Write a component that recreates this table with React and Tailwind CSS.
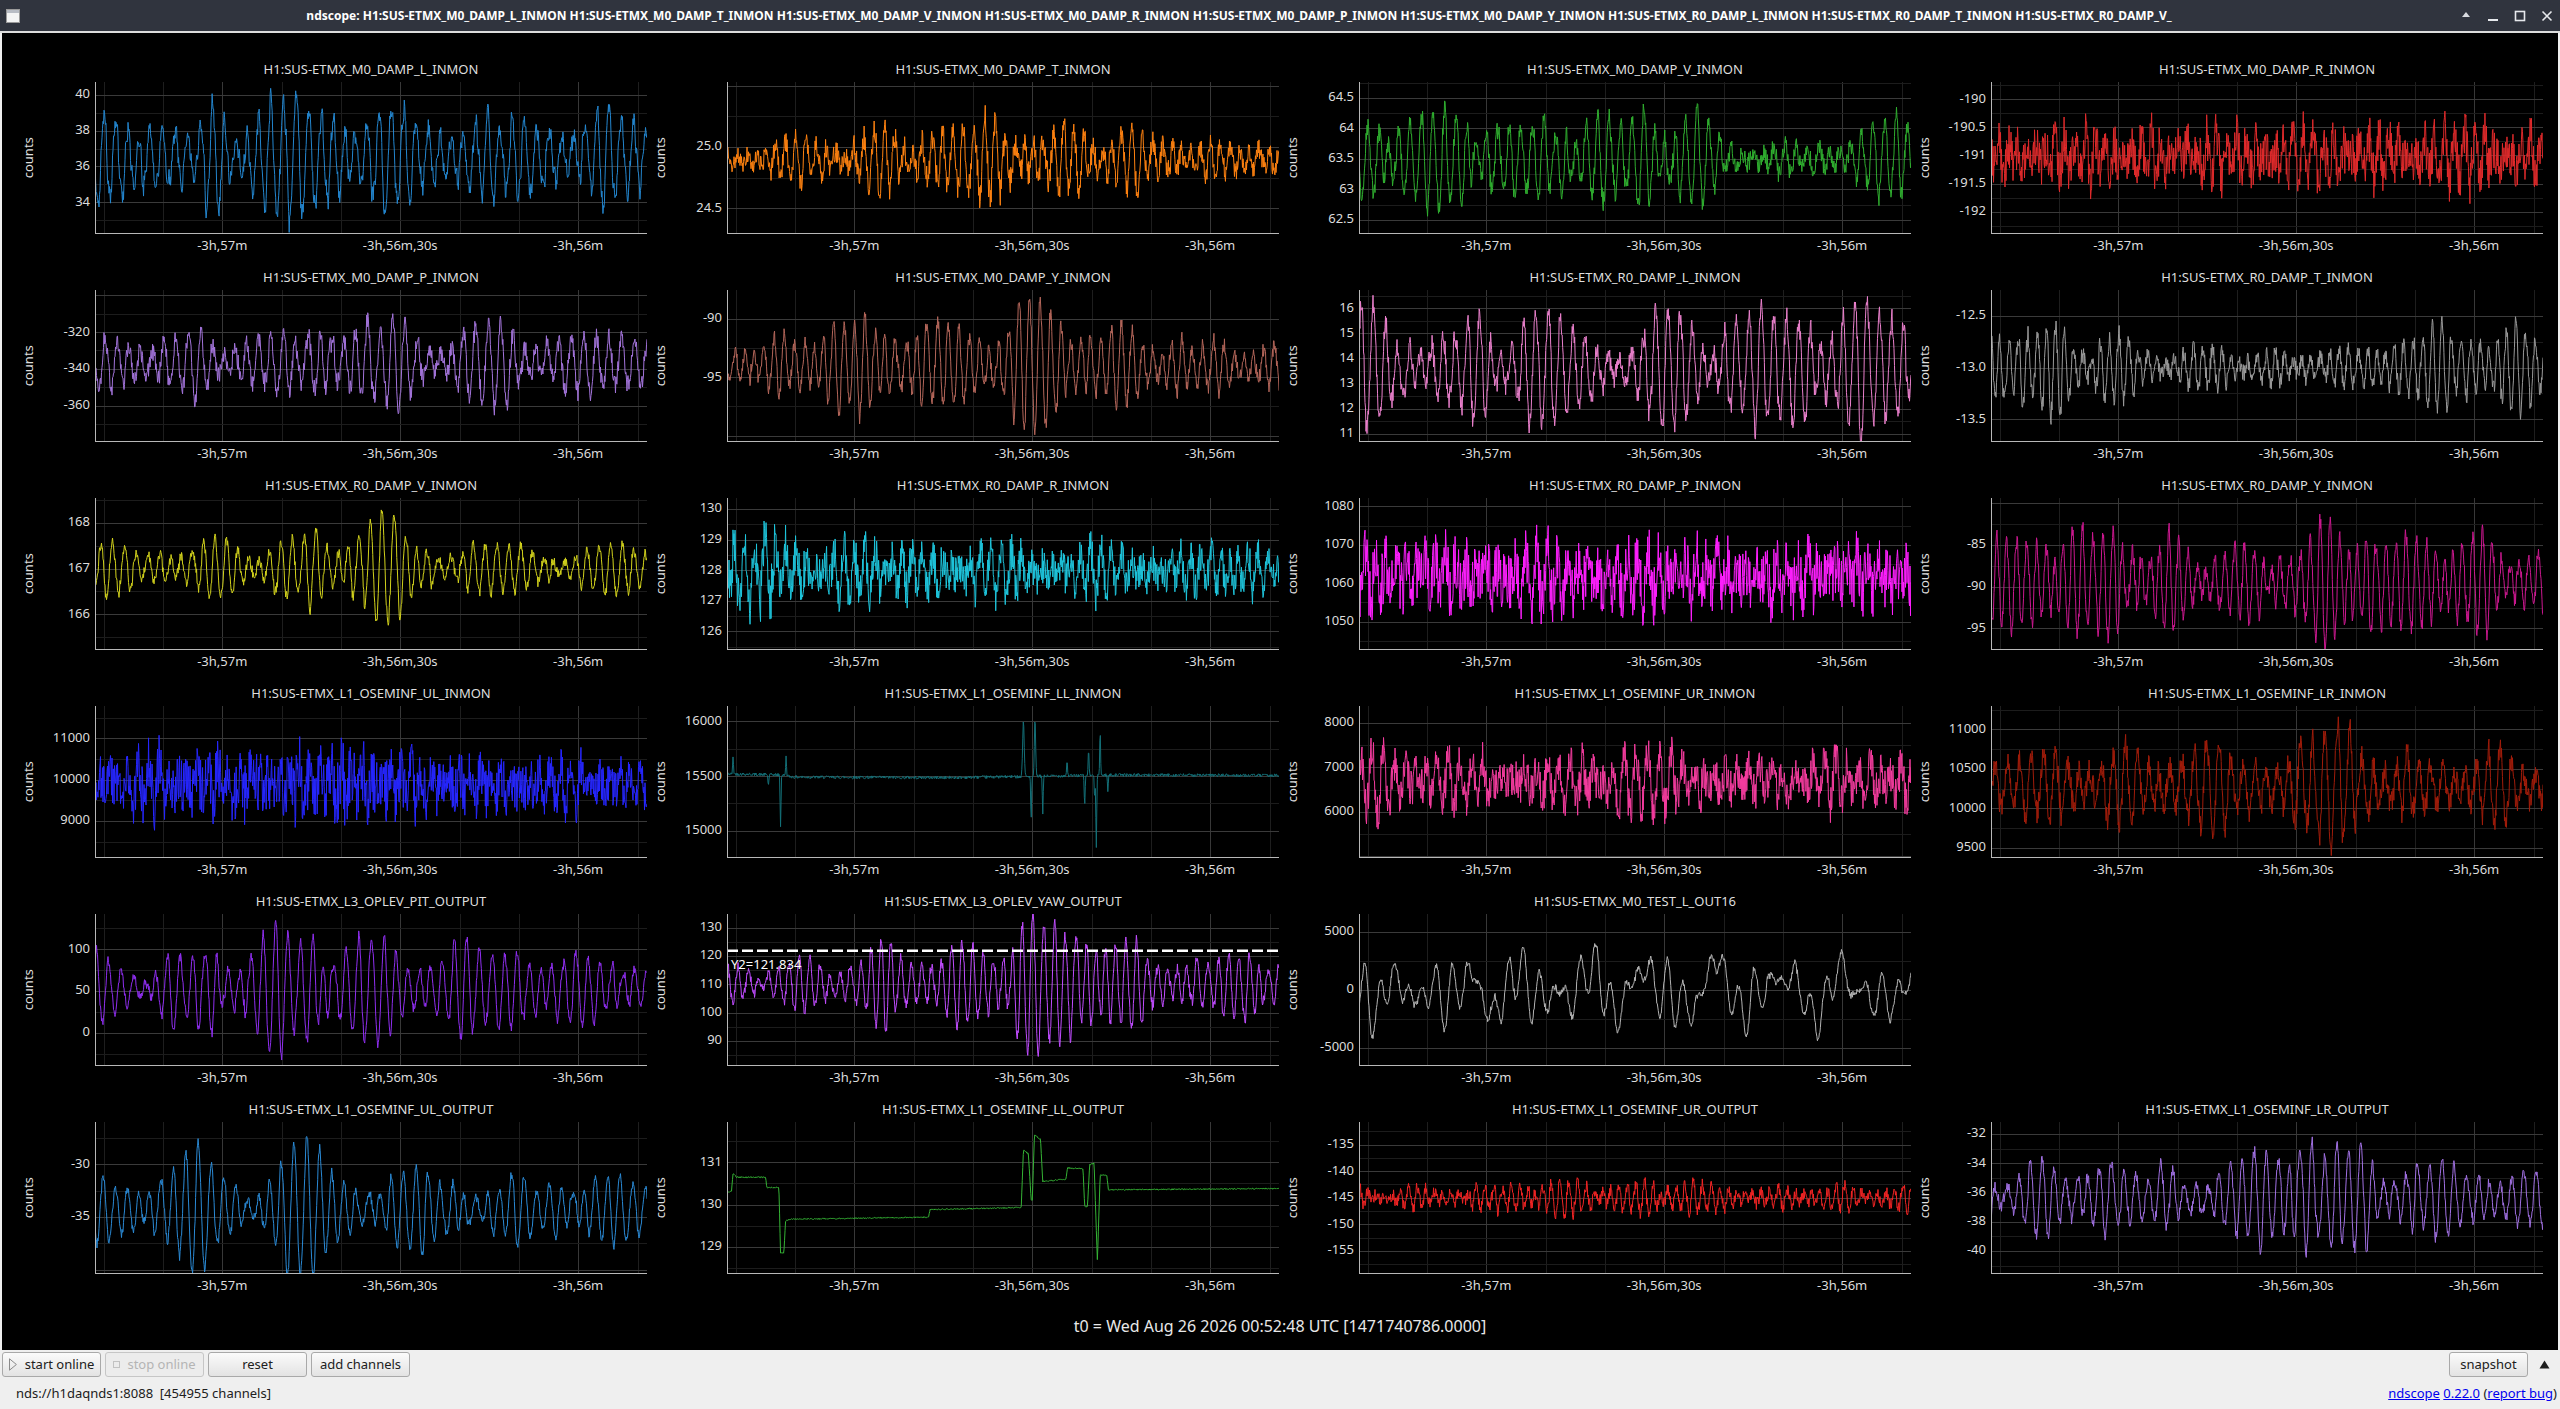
import React from 'react';

// plot geometry (px)
const W = 552;
const H = 152;
const AX = 56;
const N = 1104;

const XTICKS = [
  { k: 2, label: '-3h,57m' },
  { k: 5, label: '-3h,56m,30s' },
  { k: 8, label: '-3h,56m' },
];
const xf = (k) => 0.0156 + 0.10747 * k;

function rng(seed) {
  let a = seed >>> 0;
  return () => {
    a = (a + 0x6d2b79f5) >>> 0;
    let t = a;
    t = Math.imul(t ^ (t >>> 15), t | 1);
    t ^= t + Math.imul(t ^ (t >>> 7), t | 61);
    return ((t ^ (t >>> 14)) >>> 0) / 4294967296;
  };
}

function interp(pts, t) {
  if (t <= pts[0][0]) return pts[0][1];
  for (let i = 1; i < pts.length; i++) {
    if (t <= pts[i][0]) {
      const [t0, v0] = pts[i - 1];
      const [t1, v1] = pts[i];
      return v0 + ((v1 - v0) * (t - t0)) / (t1 - t0);
    }
  }
  return pts[pts.length - 1][1];
}

const TAU = Math.PI * 2;

function makeSignal(s) {
  const r = rng(s.seed);
  const out = new Array(N);
  if (s.type === 'steps') {
    for (let i = 0; i < N; i++) {
      const t = i / (N - 1);
      out[i] = interp(s.pts, t) + (r() - 0.5) * 2 * s.noise;
    }
    return out;
  }
  if (s.type === 'spikes') {
    for (let i = 0; i < N; i++) {
      const t = i / (N - 1);
      let v = interp(s.base, t) + (r() - 0.5) * 2 * s.noise;
      for (const [tc, a, w] of s.spikes) {
        const d = (t - tc) / (w || 0.0011);
        if (Math.abs(d) < 4) v += a * Math.exp(-d * d);
      }
      out[i] = v;
    }
    return out;
  }
  if (s.type === 'multi') {
    // sum of random slow tones, a wandering signal
    const tones = Array.from({ length: 9 }, () => ({ f: 6 + r() * 34, a: 0.4 + r(), p: r() * TAU }));
    let g = 0;
    for (let i = 0; i < N; i++) {
      const t = i / (N - 1);
      let v = 0;
      for (const tn of tones) v += tn.a * Math.sin(TAU * tn.f * t + tn.p);
      g = g * 0.9 + (r() - 0.5) * 0.5;
      out[i] = s.mean + s.A * v * 0.45 + s.A * g * 0.5 + (r() - 0.5) * 2 * s.noise;
    }
    return out;
  }
  const ph = [r(), r(), r()].map((x) => x * TAU);
  const amf = [2 + r() * 3, 5 + r() * 4, 9 + r() * 6];
  const amp = [r(), r(), r()].map((x) => x * TAU);
  const f2 = s.f2 ?? s.f * 0.88;
  const b = s.b ?? 0.4;
  const am = s.am ?? 0.25;
  const amr = s.amr ?? 0.9;
  let walk = 0;
  let g = 0;
  for (let i = 0; i < N; i++) {
    const t = i / (N - 1);
    walk = walk * 0.994 + (r() - 0.5) * (s.jit ?? 0.22);
    g = g * 0.965 + (r() - 0.5) * 0.16;
    const e = s.env ? interp(s.env, t) : 1;
    const m =
      1 +
      am *
        (Math.sin(TAU * amf[0] * t + amp[0]) * 0.5 +
          Math.sin(TAU * amf[1] * t + amp[1]) * 0.3 +
          Math.sin(TAU * amf[2] * t + amp[2]) * 0.2) +
      amr * g;
    const osc = Math.sin(TAU * s.f * t + ph[0] + walk) + b * Math.sin(TAU * f2 * t + ph[1] - walk * 0.5);
    const fast = (s.c ?? 0) * Math.sin(TAU * (s.fc ?? 140) * t + ph[2]);
    out[i] = s.mean + s.A * e * (m * osc + fast) + (r() - 0.5) * 2 * s.noise * (s.nenv ? interp(s.nenv, t) : 1);
  }
  return out;
}

const PLOTS = [
  // row 1
  { title: 'H1:SUS-ETMX_M0_DAMP_L_INMON', color: '#2386cf', min: 32.22, max: 40.72, ticks: ['34', '36', '38', '40'],
    sig: { seed: 11, mean: 36.5, A: 2.0, f: 46, b: 0.45, noise: 0.4, am: 0.3, c: 0.15 } },
  { title: 'H1:SUS-ETMX_M0_DAMP_T_INMON', color: '#ff8210', min: 24.29, max: 25.53, ticks: ['24.5', '25.0'],
    sig: { seed: 12, mean: 24.9, A: 0.13, f: 56, b: 0.5, noise: 0.09, am: 0.3, env: [[0, 0.6], [0.35, 1.35], [0.6, 1.5], [0.8, 1], [1, 0.8]], nenv: [[0, 0.8], [0.5, 1.3], [1, 0.8]] } },
  { title: 'H1:SUS-ETMX_M0_DAMP_V_INMON', color: '#2fae2f', min: 62.27, max: 64.76, ticks: ['62.5', '63', '63.5', '64', '64.5'],
    sig: { seed: 13, mean: 63.5, A: 0.45, f: 50, b: 0.5, noise: 0.15, am: 0.3, env: [[0, 1], [0.35, 1.3], [0.6, 1], [0.72, 0.45], [0.85, 0.6], [1, 1.1]] } },
  { title: 'H1:SUS-ETMX_M0_DAMP_R_INMON', color: '#e02a2b', min: -192.4, max: -189.69, ticks: ['-192', '-191.5', '-191', '-190.5', '-190'],
    sig: { seed: 14, mean: -191.0, A: 0.22, f: 58, b: 0.6, noise: 0.42, am: 0.3 } },
  // row 2
  { title: 'H1:SUS-ETMX_M0_DAMP_P_INMON', color: '#a374db', min: -379.8, max: -297.1, ticks: ['-360', '-340', '-320'],
    sig: { seed: 21, mean: -337, A: 12, f: 46, b: 0.45, noise: 5, am: 0.3, env: [[0, 1], [0.3, 1], [0.45, 1.6], [0.6, 1.1], [1, 1]] } },
  { title: 'H1:SUS-ETMX_M0_DAMP_Y_INMON', color: '#b4665a', min: -100.54, max: -87.54, ticks: ['-95', '-90'],
    sig: { seed: 22, mean: -94, A: 2.6, f: 54, b: 0.35, noise: 0.6, am: 0.2, env: [[0, 0.6], [0.2, 1.3], [0.35, 1.1], [0.45, 0.9], [0.55, 1.6], [0.7, 0.8], [1, 0.6]] } },
  { title: 'H1:SUS-ETMX_R0_DAMP_L_INMON', color: '#ea80cc', min: 10.68, max: 16.72, ticks: ['11', '12', '13', '14', '15', '16'],
    sig: { seed: 23, mean: 13.6, A: 1.4, f: 47, b: 0.5, noise: 0.4, am: 0.3, env: [[0, 1.1], [0.25, 0.8], [0.5, 1], [0.9, 1.2], [1, 1.4]] } },
  { title: 'H1:SUS-ETMX_R0_DAMP_T_INMON', color: '#9a9a9a', min: -13.72, max: -12.25, ticks: ['-13.5', '-13.0', '-12.5'],
    sig: { seed: 24, mean: -13.0, A: 0.24, f: 60, b: 0.4, noise: 0.08, am: 0.2, env: [[0, 1.5], [0.15, 1.3], [0.3, 0.6], [0.55, 0.4], [0.7, 0.9], [1, 1.1]] } },
  // row 3
  { title: 'H1:SUS-ETMX_R0_DAMP_V_INMON', color: '#d2d21c', min: 165.22, max: 168.54, ticks: ['166', '167', '168'],
    sig: { seed: 31, mean: 167, A: 0.42, f: 49, b: 0.45, noise: 0.11, am: 0.25, env: [[0, 0.8], [0.3, 1], [0.5, 1.7], [0.65, 1.1], [1, 0.8]] } },
  { title: 'H1:SUS-ETMX_R0_DAMP_R_INMON', color: '#1ec5dc', min: 125.39, max: 130.36, ticks: ['126', '127', '128', '129', '130'],
    sig: { seed: 32, mean: 128.0, A: 0.45, f: 56, b: 0.6, noise: 0.65, am: 0.3, env: [[0, 1.6], [0.2, 1.1], [1, 0.9]], nenv: [[0, 1.4], [0.2, 1], [1, 0.85]] } },
  { title: 'H1:SUS-ETMX_R0_DAMP_P_INMON', color: '#ff1fff', min: 1042.6, max: 1082.2, ticks: ['1050', '1060', '1070', '1080'],
    sig: { seed: 33, mean: 1062, A: 3.5, f: 55, b: 0.6, noise: 7.5, am: 0.3 } },
  { title: 'H1:SUS-ETMX_R0_DAMP_Y_INMON', color: '#cc1890', min: -97.58, max: -79.37, ticks: ['-95', '-90', '-85'],
    sig: { seed: 34, mean: -89.5, A: 3.8, f: 58, b: 0.4, noise: 1, am: 0.25, env: [[0, 0.9], [0.25, 1.2], [0.5, 0.8], [0.65, 1.5], [0.85, 0.9], [1, 0.6]] } },
  // row 4
  { title: 'H1:SUS-ETMX_L1_OSEMINF_UL_INMON', color: '#2626ff', min: 8104, max: 11784, ticks: ['9000', '10000', '11000'],
    sig: { seed: 41, mean: 9900, A: 280, f: 55, b: 0.6, noise: 560, am: 0.3, nenv: [[0, 1], [0.45, 1.55], [0.65, 1.1], [1, 0.8]] } },
  { title: 'H1:SUS-ETMX_L1_OSEMINF_LL_INMON', color: '#137078', min: 14753, max: 16138, ticks: ['15000', '15500', '16000'],
    sig: { seed: 42, type: 'spikes', noise: 14,
      base: [[0, 15520], [0.1, 15510], [0.12, 15490], [0.4, 15485], [0.53, 15495], [0.7, 15510], [1, 15505]],
      spikes: [[0.011, 150], [0.075, -100], [0.097, -470], [0.107, 170], [0.537, 500, 0.002], [0.551, -400], [0.558, 520, 0.0016], [0.572, -340], [0.616, 140], [0.648, -280], [0.655, 240], [0.666, -200], [0.669, -650], [0.676, 390], [0.69, -140]] } },
  { title: 'H1:SUS-ETMX_L1_OSEMINF_UR_INMON', color: '#f53c9f', min: 4966, max: 8382, ticks: ['6000', '7000', '8000'],
    sig: { seed: 43, mean: 6700, A: 320, f: 50, b: 0.6, noise: 440, am: 0.3 } },
  { title: 'H1:SUS-ETMX_L1_OSEMINF_LR_INMON', color: '#a11c0a', min: 9373, max: 11295, ticks: ['9500', '10000', '10500', '11000'],
    sig: { seed: 44, mean: 10280, A: 330, f: 47, b: 0.4, noise: 150, am: 0.3, env: [[0, 0.9], [0.5, 1], [0.6, 1.5], [0.68, 1.5], [0.8, 0.9], [1, 0.8]] } },
  // row 5
  { title: 'H1:SUS-ETMX_L3_OPLEV_PIT_OUTPUT', color: '#8f2ef0', min: -39.5, max: 141.9, ticks: ['0', '50', '100'],
    sig: { seed: 51, mean: 52, A: 33, f: 46, b: 0.45, noise: 5, am: 0.3, env: [[0, 1], [0.3, 1.1], [0.5, 1.45], [0.65, 1], [1, 0.9]] } },
  { title: 'H1:SUS-ETMX_L3_OPLEV_YAW_OUTPUT', color: '#c04cff', min: 81.1, max: 134.8, ticks: ['90', '100', '110', '120', '130'], cursor: 121.834,
    sig: { seed: 52, mean: 110, A: 9, f: 54, b: 0.35, noise: 1.8, am: 0.25, env: [[0, 0.6], [0.2, 0.8], [0.3, 1.3], [0.45, 0.9], [0.55, 1.9], [0.67, 1.9], [0.76, 0.9], [1, 0.9]] } },
  { title: 'H1:SUS-ETMX_M0_TEST_L_OUT16', color: '#b4b4b4', min: -6559, max: 6533, ticks: ['-5000', '0', '5000'],
    sig: { seed: 53, type: 'multi', mean: 0, A: 1700, noise: 220 } },
  null,
  // row 6
  { title: 'H1:SUS-ETMX_L1_OSEMINF_UL_OUTPUT', color: '#2a8ad6', min: -40.4, max: -26.0, ticks: ['-35', '-30'],
    sig: { seed: 61, mean: -34.3, A: 2.4, f: 46, b: 0.45, noise: 0.35, am: 0.3, env: [[0, 0.9], [0.35, 1.5], [0.55, 1.2], [0.7, 0.9], [1, 0.9]] } },
  { title: 'H1:SUS-ETMX_L1_OSEMINF_LL_OUTPUT', color: '#35b435', min: 128.35, max: 131.96, ticks: ['129', '130', '131'],
    sig: { seed: 62, type: 'steps', noise: 0.014,
      pts: [[0, 130.3], [0.008, 130.3], [0.011, 130.75], [0.017, 130.65], [0.07, 130.65], [0.072, 130.4], [0.094, 130.4], [0.097, 128.85], [0.103, 128.85], [0.106, 129.6], [0.112, 129.65], [0.365, 129.7], [0.368, 129.88], [0.533, 129.93], [0.537, 131.3], [0.546, 131.2], [0.551, 130.1], [0.553, 130.1], [0.557, 131.65], [0.568, 131.55], [0.572, 130.55], [0.614, 130.6], [0.617, 130.87], [0.645, 130.85], [0.648, 129.95], [0.653, 129.95], [0.657, 130.95], [0.665, 130.98], [0.671, 128.65], [0.676, 130.7], [0.688, 130.7], [0.691, 130.35], [1, 130.38]] } },
  { title: 'H1:SUS-ETMX_L1_OSEMINF_UR_OUTPUT', color: '#f22424', min: -159.35, max: -130.76, ticks: ['-155', '-150', '-145', '-140', '-135'],
    sig: { seed: 63, mean: -145, A: 1.5, f: 66, b: 0.5, noise: 1.2, am: 0.3, env: [[0, 0.9], [0.5, 1.4], [0.65, 1.3], [0.75, 0.9], [1, 0.9]] } },
  { title: 'H1:SUS-ETMX_L1_OSEMINF_LR_OUTPUT', color: '#a070e2', min: -41.58, max: -31.18, ticks: ['-40', '-38', '-36', '-34', '-32'],
    sig: { seed: 64, mean: -36.4, A: 1.6, f: 47, b: 0.4, noise: 0.35, am: 0.3, env: [[0, 1], [0.45, 1], [0.55, 2.1], [0.68, 1.9], [0.78, 1], [1, 1]] } },
];

function PlotArea({ p }) {
  const ys = (v) => ((p.max - v) / (p.max - p.min)) * H;
  const data = React.useMemo(() => makeSignal(p.sig), [p]);
  const pts = data
    .map((v, i) => `${((i / (N - 1)) * W).toFixed(2)},${ys(Math.min(p.max, Math.max(p.min, v))).toFixed(2)}`)
    .join(' ');
  const tv = p.ticks.map(Number);
  const step = Math.abs(tv[1] - tv[0]);
  const minor = [];
  for (let v = Math.min(...tv) - step * 4 + step / 2; v < p.max; v += step) {
    if (v > p.min) minor.push(v);
  }
  const major = [];
  for (let v = Math.min(...tv) - step * 4; v < p.max; v += step) {
    if (v > p.min) major.push(v);
  }

  return (
    <svg width={AX + W} height={H + 24} className="block overflow-visible">
      <svg x={AX} y={0} width={W} height={H}>
        {Array.from({ length: 10 }, (_, k) => {
          const x = Math.round(xf(k) * W) + 0.5;
          const isMajor = k === 2 || k === 5 || k === 8;
          return <line key={'v' + k} x1={x} x2={x} y1={0} y2={H} stroke={isMajor ? '#383838' : '#1e1e1e'} shapeRendering="crispEdges" />;
        })}
        {minor.map((v) => (
          <line key={'m' + v} x1={0} x2={W} y1={Math.round(ys(v)) + 0.5} y2={Math.round(ys(v)) + 0.5} stroke="#1c1c1c" shapeRendering="crispEdges" />
        ))}
        {major.map((v) => (
          <line key={'M' + v} x1={0} x2={W} y1={Math.round(ys(v)) + 0.5} y2={Math.round(ys(v)) + 0.5} stroke="#3a3a3a" shapeRendering="crispEdges" />
        ))}
        <polyline points={pts} fill="none" stroke={p.color} strokeWidth="1" strokeLinejoin="round" />
        {p.cursor != null && (
          <>
            <line x1={0} x2={W} y1={ys(p.cursor)} y2={ys(p.cursor)} stroke="#ffffff" strokeWidth="2.5" strokeDasharray="11 4" />
            <text x={4} y={ys(p.cursor) + 15} fontSize="13" fill="#ffffff" dominantBaseline="middle">
              Y2={p.cursor}
            </text>
          </>
        )}
      </svg>
      <line x1={AX + 0.5} x2={AX + 0.5} y1={0} y2={H} stroke="#b8b8b8" shapeRendering="crispEdges" />
      <line x1={AX} x2={AX + W} y1={H - 0.5} y2={H - 0.5} stroke="#b8b8b8" shapeRendering="crispEdges" />
      {p.ticks.map((t) => (
        <text key={t} x={AX - 5} y={ys(Number(t))} fontSize="13" fill="#dcdcdc" textAnchor="end" dominantBaseline="middle">
          {t}
        </text>
      ))}
      {XTICKS.map((t) => (
        <text key={t.label} x={AX + xf(t.k) * W} y={H + 13} fontSize="13" fill="#dcdcdc" textAnchor="middle" dominantBaseline="middle">
          {t.label}
        </text>
      ))}
    </svg>
  );
}

function Cell({ p }) {
  if (!p) return <div className="h-[201px]" />;
  return (
    <div className="flex h-[201px] flex-col">
      <div className="flex h-[25px] items-center justify-center pl-[76px] pr-[4px] text-[13px] text-[#dedede]">
        {p.title}
      </div>
      <div className="flex">
        <div className="flex h-[152px] w-[20px] items-center justify-center">
          <span className="block -rotate-90 whitespace-nowrap text-[13px] text-[#dedede]">counts</span>
        </div>
        <PlotArea p={p} />
      </div>
    </div>
  );
}

function TitleBar() {
  const title =
    'ndscope: H1:SUS-ETMX_M0_DAMP_L_INMON H1:SUS-ETMX_M0_DAMP_T_INMON H1:SUS-ETMX_M0_DAMP_V_INMON H1:SUS-ETMX_M0_DAMP_R_INMON H1:SUS-ETMX_M0_DAMP_P_INMON H1:SUS-ETMX_M0_DAMP_Y_INMON H1:SUS-ETMX_R0_DAMP_L_INMON H1:SUS-ETMX_R0_DAMP_T_INMON H1:SUS-ETMX_R0_DAMP_V_';
  return (
    <div className="flex h-[31px] items-center bg-[#30343e] text-white">
      <div className="flex w-[26px] justify-center">
        <svg width="14" height="14" viewBox="0 0 14 14">
          <rect x="0.5" y="0.5" width="13" height="13" fill="#f4f4f4" stroke="#9a9a9a" />
          <rect x="1" y="1" width="12" height="3" fill="#b8bcc4" />
        </svg>
      </div>
      <div className="flex-1 overflow-hidden whitespace-nowrap text-center text-[12px] font-bold">{title}</div>
      <div className="flex w-[108px]">
        <div className="flex w-[27px] justify-center">
          <svg width="10" height="8" viewBox="0 0 10 8"><path d="M1 7 L5 2 L9 7 Z" fill="#d8dbe0" /></svg>
        </div>
        <div className="flex w-[27px] justify-center">
          <svg width="12" height="12" viewBox="0 0 12 12"><rect x="1" y="9" width="10" height="2" fill="#e6e8ec" /></svg>
        </div>
        <div className="flex w-[27px] justify-center">
          <svg width="12" height="12" viewBox="0 0 12 12"><rect x="1.5" y="1.5" width="9" height="9" fill="none" stroke="#e6e8ec" strokeWidth="1.6" /></svg>
        </div>
        <div className="flex w-[27px] justify-center">
          <svg width="12" height="12" viewBox="0 0 12 12"><path d="M1.5 1.5 L10.5 10.5 M10.5 1.5 L1.5 10.5" stroke="#e6e8ec" strokeWidth="1.6" /></svg>
        </div>
      </div>
    </div>
  );
}

const btn =
  'flex h-[25px] w-[99px] items-center justify-center gap-[8px] rounded-[3px] border border-[#a9a9a9] bg-linear-to-b from-[#fbfbfb] to-[#e3e3e3] text-[13px] text-[#202020]';

export default function App() {
  return (
    <div className="flex h-[1409px] w-full flex-col overflow-hidden bg-[#efefef] font-['Noto_Sans',sans-serif]">
      <TitleBar />
      <div className="h-[2px] bg-[#dcdcdc]" />
      <div className="mx-[2px] flex h-[1317px] flex-col bg-black">
        <div className="grid grid-cols-[repeat(4,632px)] gap-y-[7px] pl-[17px] pt-[24px]">
          {PLOTS.map((p, i) => (
            <Cell key={i} p={p} />
          ))}
        </div>
        <div className="flex flex-1 items-center justify-center pt-[4px] text-[16px] text-[#e8e8e8]">
          t0 = Wed Aug 26 2026 00:52:48 UTC [1471740786.0000]
        </div>
      </div>
      <div className="flex items-center gap-[4px] px-[2px] pt-[2px]">
        <button className={btn}>
          <svg width="8" height="13" viewBox="0 0 8 13"><path d="M0.5 0.8 L7.4 6.5 L0.5 12.2 Z" fill="none" stroke="#8a8a8a" /></svg>
          <span>start online</span>
        </button>
        <button className="flex h-[25px] w-[99px] items-center justify-center gap-[7px] rounded-[3px] border border-[#c6c6c6] bg-[#ececec] text-[13px] text-[#b4b4b4]">
          <svg width="7" height="7" viewBox="0 0 7 7"><rect x="0.5" y="0.5" width="6" height="6" fill="none" stroke="#c2c2c2" /></svg>
          <span>stop online</span>
        </button>
        <button className={btn}>reset</button>
        <button className={btn}>add channels</button>
        <div className="flex-1" />
        <button className="flex h-[25px] w-[79px] items-center justify-center rounded-[3px] border border-[#a9a9a9] bg-linear-to-b from-[#fbfbfb] to-[#e3e3e3] text-[13px] text-[#202020]">
          snapshot
        </button>
        <div className="flex w-[26px] justify-center pr-[2px]">
          <svg width="11" height="9" viewBox="0 0 11 9"><path d="M0.5 8.5 L5.5 0.5 L10.5 8.5 Z" fill="#1e1e1e" /></svg>
        </div>
      </div>
      <div className="flex flex-1 items-center justify-between pl-[16px] pr-[3px] pt-[2px] text-[13px] text-[#202020]">
        <span className="whitespace-pre">nds://h1daqnds1:8088  [454955 channels]</span>
        <span>
          <a className="text-[#0000ee] underline">ndscope</a> <a className="text-[#0000ee] underline">0.22.0</a> (
          <a className="text-[#0000ee] underline">report bug</a>)
        </span>
      </div>
    </div>
  );
}
